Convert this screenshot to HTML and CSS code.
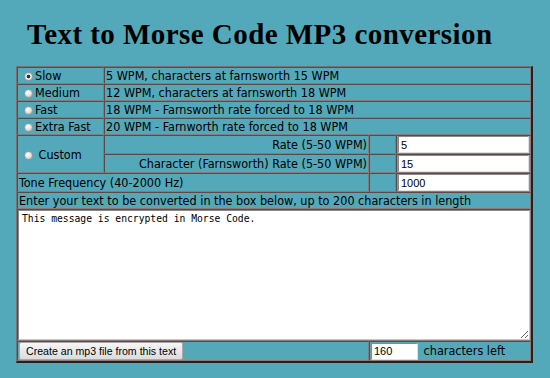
FILE: index.html
```html
<!DOCTYPE html>
<html lang="en">
<head>
    <meta charset="UTF-8">
    <title>Text to Morse Code MP3 conversion</title>
    <link rel="stylesheet" href="styles.css">
</head>
<body>
    <h1 class="page-title">Text to Morse Code MP3 conversion</h1>

    <form class="morse-form">
        <table class="morse-table">
            <colgroup>
                <col class="col-label">
                <col class="col-desc">
                <col class="col-gap">
                <col class="col-value">
            </colgroup>
            <tr>
                <td><input type="radio" name="speed" class="radio" checked>Slow</td>
                <td colspan="3">5 WPM, characters at farnsworth 15 WPM</td>
            </tr>
            <tr>
                <td><input type="radio" name="speed" class="radio">Medium</td>
                <td colspan="3">12 WPM, characters at farnsworth 18 WPM</td>
            </tr>
            <tr>
                <td><input type="radio" name="speed" class="radio">Fast</td>
                <td colspan="3">18 WPM - Farnsworth rate forced to 18 WPM</td>
            </tr>
            <tr>
                <td><input type="radio" name="speed" class="radio">Extra Fast</td>
                <td colspan="3">20 WPM - Farnworth rate forced to 18 WPM</td>
            </tr>
            <tr class="input-row">
                <td rowspan="2" class="custom-cell"><input type="radio" name="speed" class="radio"> Custom</td>
                <td class="right">Rate (5-50 WPM)</td>
                <td></td>
                <td><input type="text" class="field" value="5"></td>
            </tr>
            <tr class="input-row">
                <td class="right">Character (Farnsworth) Rate (5-50 WPM)</td>
                <td></td>
                <td><input type="text" class="field" value="15"></td>
            </tr>
            <tr class="input-row">
                <td colspan="2">Tone Frequency (40-2000 Hz)</td>
                <td></td>
                <td><input type="text" class="field" value="1000"></td>
            </tr>
            <tr>
                <td colspan="4">Enter your text to be converted in the box below, up to 200 characters in length</td>
            </tr>
            <tr>
                <td colspan="4" class="text-cell"><textarea class="message">This message is encrypted in Morse Code.</textarea></td>
            </tr>
            <tr class="footer-row">
                <td colspan="2"><button type="button" class="make-btn">Create an mp3 file from this text</button></td>
                <td colspan="2" class="count-cell"><input type="text" class="count" value="160"> characters left</td>
            </tr>
        </table>
    </form>
</body>
</html>
```

FILE: styles.css
```css
body {
    margin: 0;
    padding: 0 16px;
    background: #53a8b9;
    color: #000;
    font-family: 'DejaVu Sans Condensed', 'DejaVu Sans', Tahoma, sans-serif;
    font-size: 12.5px;
}

.page-title {
    margin: 0;
    padding: 21px 0 0 11px;
    height: 66px;
    box-sizing: border-box;
    font-family: 'Liberation Serif', Georgia, serif;
    font-weight: bold;
    font-size: 29px;
    line-height: 27px;
    letter-spacing: 0.45px;
}

.morse-form {
    margin: 0;
}

.morse-table {
    width: 517px;
    table-layout: fixed;
    border-collapse: separate;
    border-spacing: 0;
    border: 1px solid;
    border-color: #7d6f6f #222 #222 #7d6f6f;
    border-width: 1px 2px 2px 1px;
}

.col-label { width: 87px; }
.col-gap { width: 27px; }
.col-value { width: 135px; }

.morse-table td {
    border: 1px solid;
    border-color: #5a4a4a #8a7a7a #8a7a7a #5a4a4a;
    padding: 0 1px;
    height: 15px;
    line-height: 15px;
    white-space: nowrap;
    overflow: hidden;
}

.right {
    text-align: right;
}

.radio {
    appearance: none;
    -webkit-appearance: none;
    width: 9px;
    height: 9px;
    margin: 0 2px 0 5px;
    vertical-align: -1px;
    border-radius: 50%;
    border: 1px solid #9a9a9a;
    background: radial-gradient(circle at 40% 35%, #fff 0%, #e6e6e6 45%, #bdbdbd 100%);
    box-sizing: border-box;
}

.radio:checked {
    background: radial-gradient(circle, #333 0, #333 1.6px, #f4f4f4 2.2px, #d0d0d0 100%);
}

.custom-cell {
    vertical-align: middle;
}

.input-row td {
    height: 17px;
}

.field {
    display: block;
    width: 100%;
    height: 17px;
    margin: 0;
    padding: 0 2px;
    box-sizing: border-box;
    border: 1px solid;
    border-color: #8a8a8a #e0e0e0 #e0e0e0 #8a8a8a;
    background: #fff;
    font-family: 'Liberation Sans', Arial, sans-serif;
    font-size: 11px;
}

.morse-table td.text-cell {
    height: auto;
    line-height: normal;
    padding: 0;
}

.message {
    display: block;
    width: 100%;
    height: 130px;
    margin: 0;
    padding: 2px 3px;
    box-sizing: border-box;
    border: 1px solid;
    border-color: #8a8a8a #c8c8c8 #c8c8c8 #8a8a8a;
    background: #fff;
    font-family: 'DejaVu Sans Mono', 'Liberation Mono', monospace;
    font-size: 9.7px;
    resize: both;
}

.footer-row td {
    height: 17px;
}

.make-btn {
    display: block;
    height: 18px;
    margin: 0;
    padding: 0 6px;
    border: 1px solid #a9a9a9;
    border-radius: 2px;
    background: linear-gradient(#f6f6f6, #dcdcdc);
    font-family: 'Liberation Sans', Arial, sans-serif;
    font-size: 10.6px;
    color: #000;
}

.count {
    width: 47px;
    height: 17px;
    margin: 0 2px 0 0;
    padding: 0 2px;
    box-sizing: border-box;
    border: 1px solid;
    border-color: #8a8a8a #e0e0e0 #e0e0e0 #8a8a8a;
    background: #fff;
    font-family: 'Liberation Sans', Arial, sans-serif;
    font-size: 11px;
    vertical-align: middle;
}
```
